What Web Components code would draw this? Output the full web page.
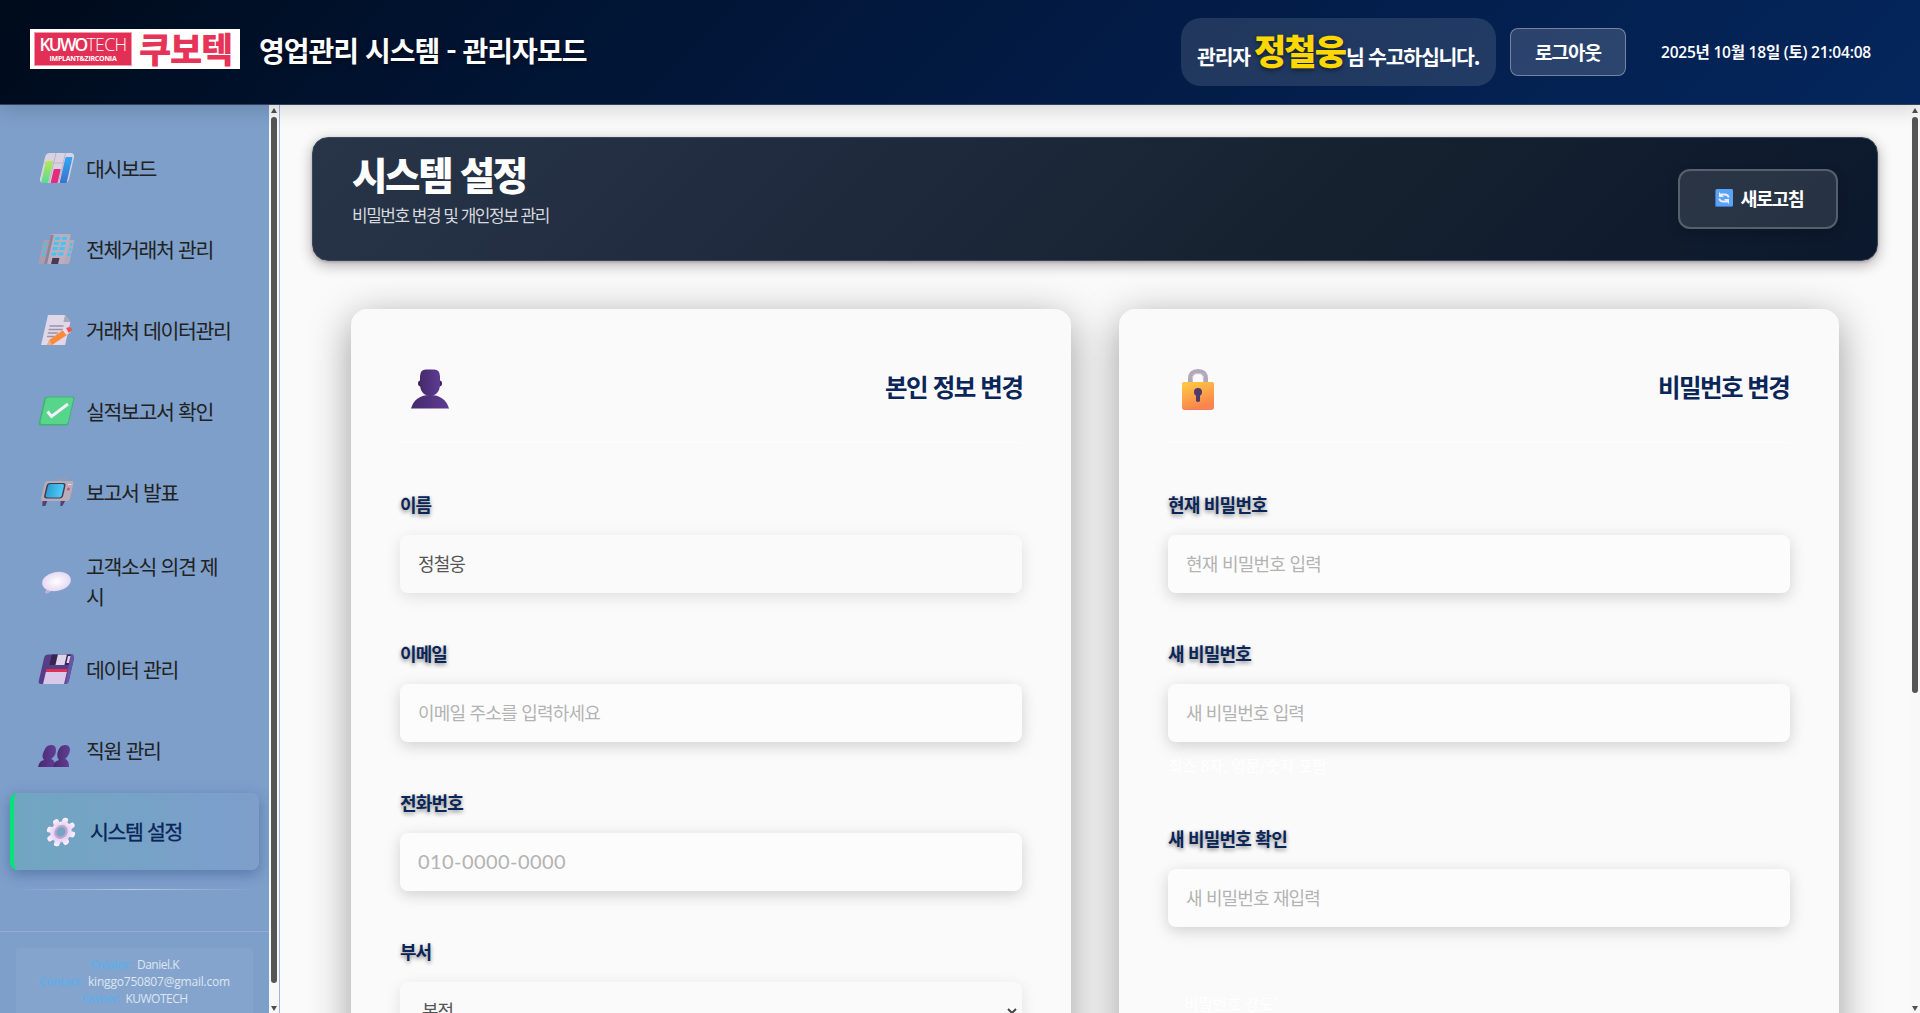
<!DOCTYPE html>
<html lang="ko">
<head>
<meta charset="utf-8">
<title>영업관리 시스템 - 관리자모드</title>
<style>
html,body{margin:0;height:100%;overflow:hidden;background:#fafafa}
body{font-family:"Noto Sans CJK KR","Noto Sans",sans-serif}
</style>
</head>
<body>
<kw-app></kw-app>
<script>
const define=(name,css,html,ready)=>{
  const tpl=document.createElement('template');
  tpl.innerHTML=`<style>*{box-sizing:border-box}${css}</style>`;
  customElements.define(name,class extends HTMLElement{
    connectedCallback(){
      if(this.shadowRoot)return;
      const r=this.attachShadow({mode:'open'});
      r.appendChild(tpl.content.cloneNode(true));
      const t=document.createElement('template');
      t.innerHTML=typeof html==='function'?html(this):html;
      r.appendChild(t.content.cloneNode(true));
      if(ready)ready(this,r);
    }
  });
};
const ctx=document.createElement('canvas').getContext('2d');
// Tracking that makes a line of text occupy the given width.
const tracking=(text,width,style)=>{
  ctx.font=`${style.fontWeight} ${style.fontSize} ${style.fontFamily}`;
  return ((width-ctx.measureText(text).width)/text.length).toFixed(3)+'px';
};

define('kw-text',':host{display:inline-block;white-space:nowrap}','<slot></slot>',el=>{
  const w=+el.getAttribute('w');
  el.style.width=w+'px';
  el.style.letterSpacing=tracking(el.textContent,w,getComputedStyle(el));
});

const art={
chart:`<g transform="translate(7 0) skewX(-13)"><rect x="1" y="0" width="29" height="30" rx="4" fill="#d9d2e2"/><path d="M1 10h29M11 0v30M20.500 0v30" stroke="#bdb3ca" stroke-width="1"/><rect x="3" y="8" width="7" height="22" rx="1" fill="url(#a)"/><rect x="12.500" y="16" width="7" height="14" rx="1" fill="#e22d7c"/><rect x="21.500" y="4" width="7" height="26" rx="1" fill="url(#b)"/></g><defs><linearGradient id="a" x2="0" y2="1"><stop stop-color="#b6e752"/><stop offset="1" stop-color="#55dc94"/></linearGradient><linearGradient id="b" x2="0" y2="1"><stop stop-color="#2fa8f5"/><stop offset="1" stop-color="#3b72cc"/></linearGradient></defs>`,
building:`<g transform="translate(7 0) skewX(-13)"><rect x="0" y="6" width="8" height="24" rx="1" fill="#a79daf"/><rect x="23" y="6" width="8" height="24" rx="1" fill="#b3a9bb"/><rect x="6" y="0" width="20" height="30" rx="2" fill="#b9aec0"/><rect x="6" y="1" width="3" height="29" fill="#8f8499"/><path d="M11 3h5v3h-5zM18 3h5v3h-5zM11 8h5v3h-5zM18 8h5v3h-5zM11 13h5v3h-5zM18 13h5v3h-5zM11 18.500h5v3h-5zM18 18.500h5v3h-5zM2 9h2.500v3H2zM2 14h2.500v3H2zM2 19h2.500v3H2zM27.500 9H30v3h-2.500zM27.500 14H30v3h-2.500zM27.500 19H30v3h-2.500z" fill="#42c5f5"/><path d="M13 24h7v6h-7z" fill="#493956"/></g>`,
memo:`<g transform="translate(7 0) skewX(-13)"><path d="M3 0h17l7 7v23H3z" fill="#e0d8e8"/><path d="M20 0v7h7z" fill="#afa5ba"/><path d="M7 11h14M7 14.500h14M7 18h10M7 21.500h7" stroke="#9a91a5" stroke-width="1.300"/><path d="m10 25 14-12 5 5-15 12H9z" fill="#fc8a3c"/><path d="m21 15 4-3 5 5-4 3z" fill="#ecdff2"/><path d="m24 13 3-1q4 1 3 4l-2 2z" fill="#f5514d"/><path d="m10 25 4 5H9z" fill="#e8b18c"/></g>`,
check:`<g transform="translate(7 0) skewX(-13)"><rect x="0" y="0.500" width="30" height="29" rx="2.500" fill="#3eb373"/><rect x="1.500" y="1.500" width="27.500" height="26.500" rx="2" fill="#56d58b"/></g><path d="m9.500 15.500 4 5L30 8" fill="none" stroke="#f6effb" stroke-width="3"/>`,
tv:`<g transform="translate(7 0) skewX(-13)"><path d="m12 0 4 4 6-4" fill="none" stroke="#a59aab" stroke-width="1.200"/><path d="M3 23h5l-1 6H4zm18 0h5l-2 6h-2z" fill="#56406d"/><rect x="1" y="4" width="29" height="20" rx="2.500" fill="#b7acb8"/><rect x="3.500" y="6" width="19" height="15.500" rx="3" fill="#443b50"/><rect x="5" y="7" width="16" height="13.500" rx="2" fill="url(#t)"/><circle cx="26.200" cy="12" r="1.500" fill="#e4487c"/><path d="M24.500 7.500H28" stroke="#e5dce9"/></g><defs><linearGradient id="t"><stop stop-color="#2d9fd1"/><stop offset="1" stop-color="#51ccfa"/></linearGradient></defs>`,
bubble:`<defs><radialGradient id="u"><stop stop-color="#fff"/><stop offset="1" stop-color="#e5d9f3"/></radialGradient></defs><g transform="translate(-.5 .5)"><path d="M9 22 7.500 28q4 0 7-3z" fill="#c5b0de"/><ellipse cx="19" cy="16" rx="14.500" ry="9.500" fill="url(#u)" transform="rotate(-11 19 16)"/></g>`,
floppy:`<g transform="translate(7 0) skewX(-13)"><path d="M3 .5h25l2 3V27q0 3-3 3H3q-3 0-3-3V3q0-2.500 3-2.500z" fill="#573d87"/><path d="M26 .5h2l2 3V27q0 3-3 3z" fill="#6855a5"/><path d="M7 .5h19V11H7z" fill="#35254f"/><path d="M13 .5h9V11h-9z" fill="#dfd4ea"/><path d="M23.500 2H26v7h-2.500z" fill="#dfd4ea"/><path d="M5 15h21v3H5z" fill="#df2f53"/><path d="M5 18h21v12H5z" fill="#d9c8e9"/></g>`,
people:`<defs><linearGradient id="p"><stop stop-color="#4a286e"/><stop offset="1" stop-color="#623e95"/></linearGradient></defs><g fill="url(#p)" transform="translate(0 2)"><path d="M6 14Q8 8 13 8t5 5q0 6-5 9 4 1 5 8H0q1-6 6-7-3-3 0-9z"/><path d="M20 14Q22 8 27 8t5 5q-1 6-5 9 4 1 4 8H15q1-6 6-7-3-3-1-9z"/></g>`,
gear:`<defs><linearGradient id="g" x2="0" y2="1"><stop stop-color="#fff3fb"/><stop offset="1" stop-color="#e4c8fa"/></linearGradient></defs><g transform="translate(19 16) skewX(-8)"><g fill="url(#g)"><circle r="10.500"/>${[0,45,90,135,180,225,270,315].map(a=>`<rect x="-2.900" y="-14.500" width="5.800" height="9" rx="2.400" transform="rotate(${a+12})"/>`).join('')}</g><ellipse rx="5.600" ry="5.800" fill="#78a3c7" stroke="#b8aac5" stroke-width="2.200"/></g>`
};
define('kw-icon',':host{display:block;width:38px;height:30px;flex:none}svg{display:block;overflow:visible}',
  el=>`<svg width="38" height="30" viewBox="0 0 38 30">${art[el.getAttribute('name')]}</svg>`);

define('kw-logo',`:host{display:flex;width:210px;height:40px;background:#fff;padding:3px 4px;gap:7px;font-family:"Open Sans",sans-serif;color:#fff;flex:none;margin-bottom:6px}
.b{width:98px;height:34px;background:#e22f55;border:1px solid #f09aab;display:flex;flex-direction:column;align-items:center;padding-top:1px}
.a{font-size:17.500px;line-height:21px}
.s{font-size:7px;line-height:8px;font-weight:700}
.k{font:900 35px/31px "Noto Sans CJK KR",sans-serif;color:#e63358;height:34px}`,
`<div class="b"><div class="a"><kw-text w="47" style="font-weight:600">KUWO</kw-text><kw-text w="40" style="font-weight:300">TECH</kw-text></div><div class="s"><kw-text w="67">IMPLANT&amp;ZIRCONIA</kw-text></div></div><div class="k"><kw-text w="93">쿠보텍</kw-text></div>`);

define('kw-header',`:host{display:flex;position:relative;z-index:5;height:105px;flex:none;align-items:center;padding:0 49px 1px 30px;background:linear-gradient(135deg,#000b1a 0%,#00122e 22%,#031c47 60%,#04265c 100%);border-bottom:1px solid #33415d;box-shadow:0 4px 20px rgba(0,0,0,.16);color:#fff}
h1{margin:0 0 3px 19px;font-size:28px;line-height:40px;font-weight:700;text-shadow:0 2px 4px rgba(0,0,0,.4)}
.g{margin-left:auto;width:315px;height:68px;border-radius:20px;background:rgba(255,255,255,.12);padding:0 16px;display:flex;align-items:baseline;white-space:nowrap;font-size:20.500px;font-weight:600;line-height:64px}
.n{font-size:35px;font-weight:900;color:#ffd700;text-shadow:0 2px 4px rgba(0,0,0,.5);margin:0 1px 0 4px}
button{margin-left:14px;width:116px;height:48px;border:1px solid rgba(255,255,255,.35);border-radius:8px;background:rgba(255,255,255,.16);color:#fff;font:700 19px/44px "Noto Sans CJK KR",sans-serif;padding:0}
.d{margin-left:35px;padding-top:1px;font-size:15.500px;font-weight:600;line-height:20px;font-family:"Open Sans","Noto Sans CJK KR",sans-serif}`,
`<kw-logo></kw-logo><h1><kw-text w="323">영업관리 시스템 - 관리자모드</kw-text></h1><div class="g"><kw-text w="53">관리자</kw-text><kw-text class="n" w="91">정철웅</kw-text><kw-text w="132">님 수고하십니다.</kw-text></div><button><kw-text w="66">로그아웃</kw-text></button><div class="d"><kw-text w="210">2025년 10월 18일 (토) 21:04:08</kw-text></div>`);

define('kw-nav-item',`:host{display:flex;align-items:center;min-height:77px;margin:0 10px 4px;padding:16px 0 16px 28px;gap:10px;font-size:20.500px;line-height:30px;letter-spacing:-1.350px;color:#222}
.t{width:155px;white-space:nowrap;padding-bottom:2px}
:host([wrap]) .t{width:144px;white-space:normal;word-break:break-all;padding-bottom:1px;margin-bottom:-1px}
kw-icon{margin-bottom:2px}
:host([active]){border-left:4px solid #00e676;border-radius:8px;background:linear-gradient(90deg,#70a6c0,#7ba0cb 80%,#7d9fca);box-shadow:0 4px 14px rgba(20,50,110,.35);color:#0a2558;font-weight:400;-webkit-text-stroke:.3px #0a2558}`,
el=>`<kw-icon name="${el.getAttribute('icon')}"></kw-icon><div class="t"><slot></slot></div>`);

define('kw-scroll',`:host{display:flex;flex-direction:column;align-items:center;width:10px;background:#f8f8f8;padding:3px 0 2px;flex:none}
i{width:6px;background:#555;border-radius:3px;height:var(--thumb);margin-top:4px}
svg{display:block;flex:none}.e{margin-top:auto}`,
`<svg width="6" height="5"><path d="M3 0 6 5H0z" fill="#505050"/></svg><i></i><svg class="e" width="6" height="5"><path d="M0 0h6L3 5z" fill="#505050"/></svg>`);

define('kw-sidebar',`:host{display:flex;width:280px;flex:none;background:#7d9fca;border-right:1px solid #9db7da}
.c{width:269px;display:flex;flex-direction:column;overflow:hidden;padding-top:25px}
hr{border:0;height:1px;margin:15px 15px 0;background:linear-gradient(90deg,transparent,rgba(255,255,255,.45),transparent);flex:none}
.f{margin-top:41px;border-top:1px solid rgba(255,255,255,.16);padding:16px}
.k{background:rgba(255,255,255,.06);border-radius:4px;padding:8px 0 20px;font:400 12px/17px "Open Sans",sans-serif;color:#dde6f2}
.k div{display:flex;justify-content:center;gap:6px}.k b{font-weight:600;color:#5faee9}`,
`<div class="c"><nav>
<kw-nav-item icon="chart">대시보드</kw-nav-item><kw-nav-item icon="building">전체거래처 관리</kw-nav-item><kw-nav-item icon="memo">거래처 데이터관리</kw-nav-item><kw-nav-item icon="check">실적보고서 확인</kw-nav-item><kw-nav-item icon="tv">보고서 발표</kw-nav-item><kw-nav-item icon="bubble" wrap>고객소식 의견 제시</kw-nav-item><kw-nav-item icon="floppy">데이터 관리</kw-nav-item><kw-nav-item icon="people">직원 관리</kw-nav-item><kw-nav-item icon="gear" active>시스템 설정</kw-nav-item></nav><hr>
<div class="f"><div class="k"><div><b><kw-text w="41">Creator:</kw-text></b><kw-text w="42">Daniel.K</kw-text></div><div><b><kw-text w="43">Contact:</kw-text></b><kw-text w="142">kinggo750807@gmail.com</kw-text></div><div><b><kw-text w="38">Owner:</kw-text></b><kw-text w="62">KUWOTECH</kw-text></div></div></div></div><kw-scroll style="--thumb:866px"></kw-scroll>`);

define('kw-banner',`:host{display:flex;justify-content:space-between;align-items:flex-start;height:124px;border-radius:16px;border:1px solid #3b4758;background:linear-gradient(135deg,#283548 0%,#202b3f 30%,#16212f 65%,#0b182d 100%);box-shadow:0 4px 14px rgba(30,10,20,.32),0 1px 3px rgba(0,0,0,.2);padding:0 39px 0 39px;color:#fff}
h2{margin:10px 0 0;font-size:38.500px;line-height:50px;font-weight:900}
p{margin:5px 0 0;font-size:17px;line-height:24px;color:#d5d8dd}
button{margin-top:31px;width:160px;height:60px;border:2px solid rgba(255,255,255,.22);border-radius:12px;background:rgba(255,255,255,.11);box-shadow:0 4px 12px rgba(0,0,0,.2);color:#fff;display:flex;align-items:center;justify-content:center;gap:8px;font:700 18.500px/30px "Noto Sans CJK KR",sans-serif;padding:0 0 2px 2px;letter-spacing:0}`,
`<div><h2><kw-text w="172">시스템 설정</kw-text></h2><p><kw-text w="193">비밀번호 변경 및 개인정보 관리</kw-text></p></div><button><svg width="18" height="18" viewBox="0 0 18 18"><rect width="18" height="18" rx="1.500" fill="#3e70cc"/><rect x="1" width="17" height="17" rx="1.500" fill="#58a5f7"/><g fill="none" stroke="#f2e9fa" stroke-width="1.900"><path d="M6 5.500h3.500q4 0 4 3"/><path d="M12 12.500H8.500q-4 0-4-3"/></g><path d="M4 3v5h5zM14 15v-5H9z" fill="#f2e9fa"/></svg><kw-text w="63">새로고침</kw-text></button>`);

const cardArt={
person:`<svg width="38" height="40" viewBox="0 0 38 40"><defs><linearGradient id="h"><stop stop-color="#462a6c"/><stop offset="1" stop-color="#5e3b93"/></linearGradient></defs><path d="M9.500 11.500q-2.500 0-2.500 3t3 3zM28.500 11.500q2.500 0 2.500 3t-3 3z" fill="#3a205c"/><path d="M15 .5h8q6 0 6 7v8q0 6-4 9.500-6 4-12 0-4-3.500-4-9.500v-8q0-7 6-7z" fill="url(#h)"/><path d="M0 39.500Q4 26 19 26t19 13.500z" fill="url(#h)"/></svg>`,
lock:`<svg width="32" height="41" viewBox="0 0 32 41"><defs><linearGradient id="l" x2=".4" y2="1"><stop stop-color="#ffce42"/><stop offset="1" stop-color="#f9844d"/></linearGradient></defs><path d="M8 15V10q0-8 8-8t8 8v5" fill="none" stroke="#b1a8b8" stroke-width="4"/><path d="M10.500 14v-4q0-5.500 5.500-5.500T21.500 10v4" fill="none" stroke="#cbbbd9" stroke-width="1"/><rect y="13" width="32" height="28" rx="3" fill="#f47b64"/><rect width="32" height="27" y="13" rx="3" fill="url(#l)"/><circle cx="16" cy="23" r="4" fill="#503a68"/><path d="M14 24h4v8q-2 2-4 0z" fill="#503a68"/></svg>`};
define('kw-card',`:host{display:block;width:720px;height:900px;border-radius:16px;background:#fafafa;box-shadow:0 10px 40px rgba(0,0,0,.38);padding:49px 49px 0}
header{display:flex;justify-content:space-between;height:85px;border-bottom:1px solid #fdfdfd}
header svg{margin:11px 0 0 var(--inset,11px)}
h3{margin:11px 2px 0 0;font-size:24.500px;line-height:36px;font-weight:700;color:#0a2558}
.f{padding-top:48px}`,
el=>`<header>${cardArt[el.getAttribute('art')]}<h3><kw-text w="${el.getAttribute('tw')}">${el.getAttribute('heading')}</kw-text></h3></header><div class="f"><slot></slot></div>`);

define('kw-field',`:host{display:block;height:149px}:host([tall]){height:185px}
label{display:block;height:44px;font-size:18px;line-height:26px;font-weight:600;color:#0a2558;text-shadow:0 2px 4px rgba(0,0,0,.45)}
input,select{display:block;width:622px;height:58px;border:0;border-radius:8px;background:#fcfcfc;box-shadow:0 4px 15px rgba(0,0,0,.17);padding:0 18px 2px;font:400 18px "Noto Sans CJK KR",sans-serif;color:#555;outline:0;margin:0}
:host([dim]) input{background:#fafafa;box-shadow:0 4px 15px rgba(0,0,0,.11)}
select{appearance:none;background:#fafafa;padding-left:22px;box-shadow:0 4px 15px rgba(0,0,0,.1)}
input::placeholder{color:#b3b3b3;opacity:1}
.s{display:grid}.s>*{grid-area:1/1}.s svg{justify-self:end;align-self:center;margin-right:5px}
small{display:block;margin-top:11px;font-size:15.500px;line-height:24px;color:#fff}`,
el=>{const a=n=>el.getAttribute(n)||'';
 const ctl=el.hasAttribute('select')?`<div class="s"><select><option>${a('value')}</option></select><svg width="10" height="7"><path d="m1 1 4 4 4-4" fill="none" stroke="#444" stroke-width="2"/></svg></div>`:`<input value="${a('value')}" placeholder="${a('hint')}">`;
 return `<label><kw-text w="${a('lw')}">${a('label')}</kw-text></label>${ctl}${a('note')?`<small><kw-text w="156">${a('note')}</kw-text></small>`:''}`},
(el,r)=>{const i=r.querySelector('input,select');if(el.hasAttribute('latin'))i.style.font='400 20px Lato,sans-serif';
 i.style.letterSpacing=tracking(el.getAttribute('value')||el.getAttribute('hint'),+el.getAttribute('w'),getComputedStyle(i));});

define('kw-app',`:host{display:flex;flex-direction:column;height:100vh;overflow:hidden}
.r{display:flex;flex:1;min-height:0}
main{flex:1;min-width:0;overflow:hidden;padding:32px 32px 0;background:#fafafa}
.g{display:flex;gap:48px;padding:48px 39px 0}
.q{padding-left:16px;font-size:16px;line-height:24px;color:#fff;margin-top:17px}`,
`<kw-header></kw-header><div class="r"><kw-sidebar></kw-sidebar><main><kw-banner></kw-banner><div class="g">
<kw-card art="person" heading="본인 정보 변경" tw="135" style="--inset:11px"><kw-field label="이름" lw="31" value="정철웅" w="47" dim></kw-field><kw-field label="이메일" lw="47" hint="이메일 주소를 입력하세요" w="180"></kw-field><kw-field label="전화번호" lw="63" hint="010-0000-0000" w="148" latin></kw-field><kw-field label="부서" lw="31" value="본점" w="31" select></kw-field></kw-card>
<kw-card art="lock" heading="비밀번호 변경" tw="130" style="--inset:14px"><kw-field label="현재 비밀번호" lw="98" hint="현재 비밀번호 입력" w="133"></kw-field><kw-field label="새 비밀번호" lw="82" hint="새 비밀번호 입력" w="116" note="최소 8자, 영문/숫자 포함" tall></kw-field><kw-field label="새 비밀번호 확인" lw="117" hint="새 비밀번호 재입력" w="132"></kw-field><div class="q"><kw-text w="92">비밀번호 강도:</kw-text></div></kw-card>
</div></main><kw-scroll style="--thumb:576px"></kw-scroll></div>`);
</script>
</body>
</html>
